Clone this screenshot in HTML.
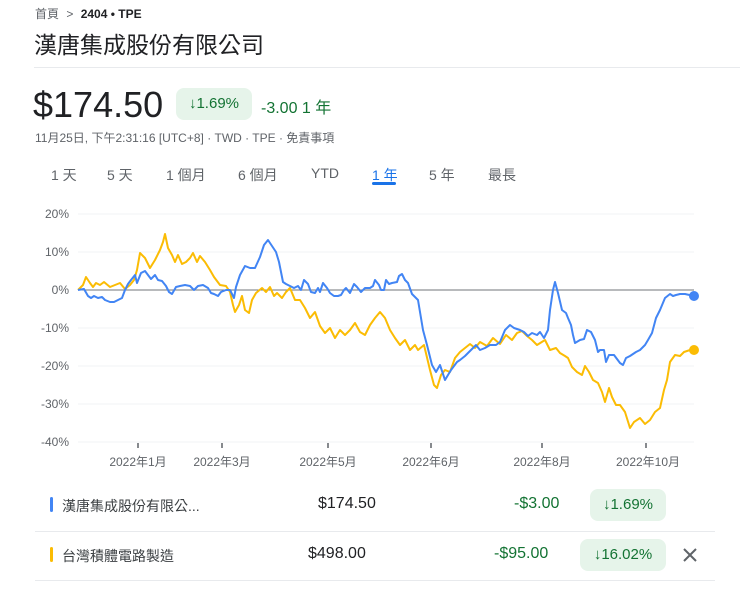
<!DOCTYPE html>
<html><head><meta charset="utf-8"><style>
body{margin:0;width:740px;height:593px;background:#fff;font-family:"Liberation Sans","Noto Sans CJK TC",sans-serif;position:relative;overflow:hidden;color:#202124}
.a{position:absolute;white-space:nowrap}
.pill{background:#e6f4ea;color:#137333;border-radius:8px;position:absolute;text-align:center}
</style></head><body>
<div class="a" style="left:35px;top:5px;font-size:12px;color:#5f6368">首頁 <span style="margin:0 4px">&gt;</span> <b style="color:#202124">2404 • TPE</b></div>
<div class="a" style="left:34px;top:26px;font-size:23px;color:#202124">漢唐集成股份有限公司</div>
<div class="a" style="left:34px;top:67px;width:706px;height:1px;background:#e8eaed"></div>
<div class="a" style="left:33px;top:84px;font-size:36px;color:#202124">$174.50</div>
<div class="pill" style="left:176px;top:88px;width:76px;height:32px;line-height:32px;font-size:15px">↓1.69%</div>
<div class="a" style="left:261px;top:94px;font-size:16px;color:#137333">-3.00 1 年</div>
<div class="a" style="left:35px;top:129px;font-size:12px;color:#5f6368">11月25日, 下午2:31:16 [UTC+8] · TWD · TPE · 免責事項</div>
<div class="a" style="top:165px;font-size:14px;color:#5f6368;left:0;width:740px">
<span class="a" style="left:51px">1 天</span><span class="a" style="left:107px">5 天</span><span class="a" style="left:166px">1 個月</span><span class="a" style="left:238px">6 個月</span><span class="a" style="left:311px">YTD</span><span class="a" style="left:372px;color:#1a73e8">1 年</span><span class="a" style="left:429px">5 年</span><span class="a" style="left:488px">最長</span></div>
<div class="a" style="left:372px;top:182px;width:24px;height:3px;background:#1a73e8;border-radius:2px"></div>
<svg class="a" style="left:0;top:195px" width="740" height="280" viewBox="0 195 740 280">
<g stroke="#f1f3f4" stroke-width="1"><line x1="78" x2="694" y1="214" y2="214"/><line x1="78" x2="694" y1="252" y2="252"/><line x1="78" x2="694" y1="328" y2="328"/><line x1="78" x2="694" y1="366" y2="366"/><line x1="78" x2="694" y1="404" y2="404"/><line x1="78" x2="694" y1="442" y2="442"/></g>
<g font-size="12" fill="#5f6368" text-anchor="end" font-family="Liberation Sans,sans-serif"><text x="69" y="218">20%</text><text x="69" y="256">10%</text><text x="69" y="294">0%</text><text x="69" y="332">-10%</text><text x="69" y="370">-20%</text><text x="69" y="408">-30%</text><text x="69" y="446">-40%</text></g>
<g stroke="#5f6368" stroke-width="1.5"><line x1="138" x2="138" y1="443" y2="448"/><line x1="222" x2="222" y1="443" y2="448"/><line x1="328" x2="328" y1="443" y2="448"/><line x1="431" x2="431" y1="443" y2="448"/><line x1="542" x2="542" y1="443" y2="448"/><line x1="646" x2="646" y1="443" y2="448"/></g>
<g font-size="12" fill="#5f6368" text-anchor="middle"><text x="138" y="466">2022年1月</text><text x="222" y="466">2022年3月</text><text x="328" y="466">2022年5月</text><text x="431" y="466">2022年6月</text><text x="542" y="466">2022年8月</text><text x="648" y="466">2022年10月</text></g>
<line x1="78" x2="694" y1="290" y2="290" stroke="#70757a" stroke-width="1"/>
<polyline fill="none" stroke="#fbbc04" stroke-width="2" stroke-linejoin="round" points="78,290 83,285 86,277 90,283 93,287 96,283 100,285 104,282 110,287 115,285 120,283 125,289 130,285 134,280 137,270 140,253 145,258 150,268 155,260 160,250 163,242 165,234 168,248 172,255 175,262 178,255 182,264 186,262 190,258 193,253 197,262 200,256 205,262 210,270 214,277 220,285 226,286 230,292 233,305 235,312 239,305 242,296 245,310 249,313 252,300 256,293 262,288 266,292 270,287 274,296 277,293 282,298 286,292 290,288 295,300 300,300 305,308 310,318 315,312 320,326 325,333 330,328 335,338 340,330 345,335 350,330 355,323 360,332 365,335 370,325 375,318 380,312 385,318 390,330 395,338 400,345 405,340 410,350 415,345 418,350 424,345 430,370 434,385 437,388 441,375 445,370 450,372 455,358 460,352 465,348 470,344 475,348 480,342 487,346 493,338 500,344 506,335 512,340 517,333 522,331 527,336 532,340 537,345 545,340 550,350 556,348 560,353 565,356 568,358 572,367 577,372 582,375 585,366 589,372 593,380 598,383 602,392 605,402 609,388 612,397 616,405 620,405 625,412 630,428 634,422 640,418 645,424 650,420 655,412 660,408 664,390 667,380 670,362 675,355 680,356 684,352 690,350 694,350"/>
<polyline fill="none" stroke="#4285f4" stroke-width="2" stroke-linejoin="round" points="78,290 84,289 88,296 91,298 94,296 98,298 102,297 105,300 110,302 114,302 118,300 122,298 125,290 128,284 131,280 135,275 137,283 141,273 145,271 148,275 151,279 155,275 158,280 162,281 166,286 169,292 172,294 176,287 180,286 185,285 190,286 194,290 198,286 203,285 208,288 211,293 214,294 218,296 221,292 226,290 230,290 234,298 236,287 240,275 245,266 250,268 255,268 260,257 264,245 268,240 272,246 276,252 279,262 283,282 286,284 290,286 294,288 298,286 301,290 304,280 308,284 311,292 315,293 318,288 320,292 323,283 327,288 330,293 334,296 338,296 341,295 344,290 346,288 350,293 354,284 357,287 361,292 365,288 370,288 373,286 375,280 379,285 381,290 384,290 386,280 389,284 392,283 397,282 399,276 402,274 405,280 408,283 412,294 418,300 423,330 427,345 432,365 436,372 440,365 445,380 451,370 457,362 460,360 465,356 470,351 476,345 480,350 485,348 490,345 496,345 500,342 505,330 510,325 514,328 520,330 524,332 528,336 532,333 537,335 540,332 544,338 548,330 550,310 553,290 555,282 558,293 562,310 566,313 568,318 571,325 573,335 575,343 580,340 584,339 587,330 591,332 595,340 598,352 600,350 604,350 606,362 609,355 614,355 620,363 623,365 626,358 630,356 636,352 640,350 645,345 648,340 652,333 656,318 660,310 665,298 670,294 673,296 676,295 680,294 685,294 694,296"/>
<circle cx="694" cy="296" r="5" fill="#4285f4"/><circle cx="694" cy="350" r="5" fill="#fbbc04"/>
</svg>
<div class="a" style="left:50px;top:497px;width:3px;height:15px;background:#4285f4;border-radius:2px"></div>
<div class="a" style="left:62px;top:496px;font-size:14px;color:#3c4043">漢唐集成股份有限公...</div>
<div class="a" style="left:318px;top:495px;font-size:16px">$174.50</div>
<div class="a" style="left:514px;top:495px;font-size:16px;color:#137333">-$3.00</div>
<div class="pill" style="left:590px;top:489px;width:76px;height:32px;line-height:32px;font-size:15px">↓1.69%</div>
<div class="a" style="left:35px;top:531px;width:680px;height:1px;background:#e8eaed"></div>
<div class="a" style="left:50px;top:547px;width:3px;height:15px;background:#fbbc04;border-radius:2px"></div>
<div class="a" style="left:62px;top:546px;font-size:14px;color:#3c4043">台灣積體電路製造</div>
<div class="a" style="left:308px;top:545px;font-size:16px">$498.00</div>
<div class="a" style="left:494px;top:545px;font-size:16px;color:#137333">-$95.00</div>
<div class="pill" style="left:580px;top:539px;width:86px;height:32px;line-height:32px;font-size:15px">↓16.02%</div>
<svg class="a" style="left:682px;top:547px" width="16" height="16"><path d="M2 2L14 14M14 2L2 14" stroke="#5f6368" stroke-width="2"/></svg>
<div class="a" style="left:35px;top:580px;width:680px;height:1px;background:#e8eaed"></div>
</body></html>
